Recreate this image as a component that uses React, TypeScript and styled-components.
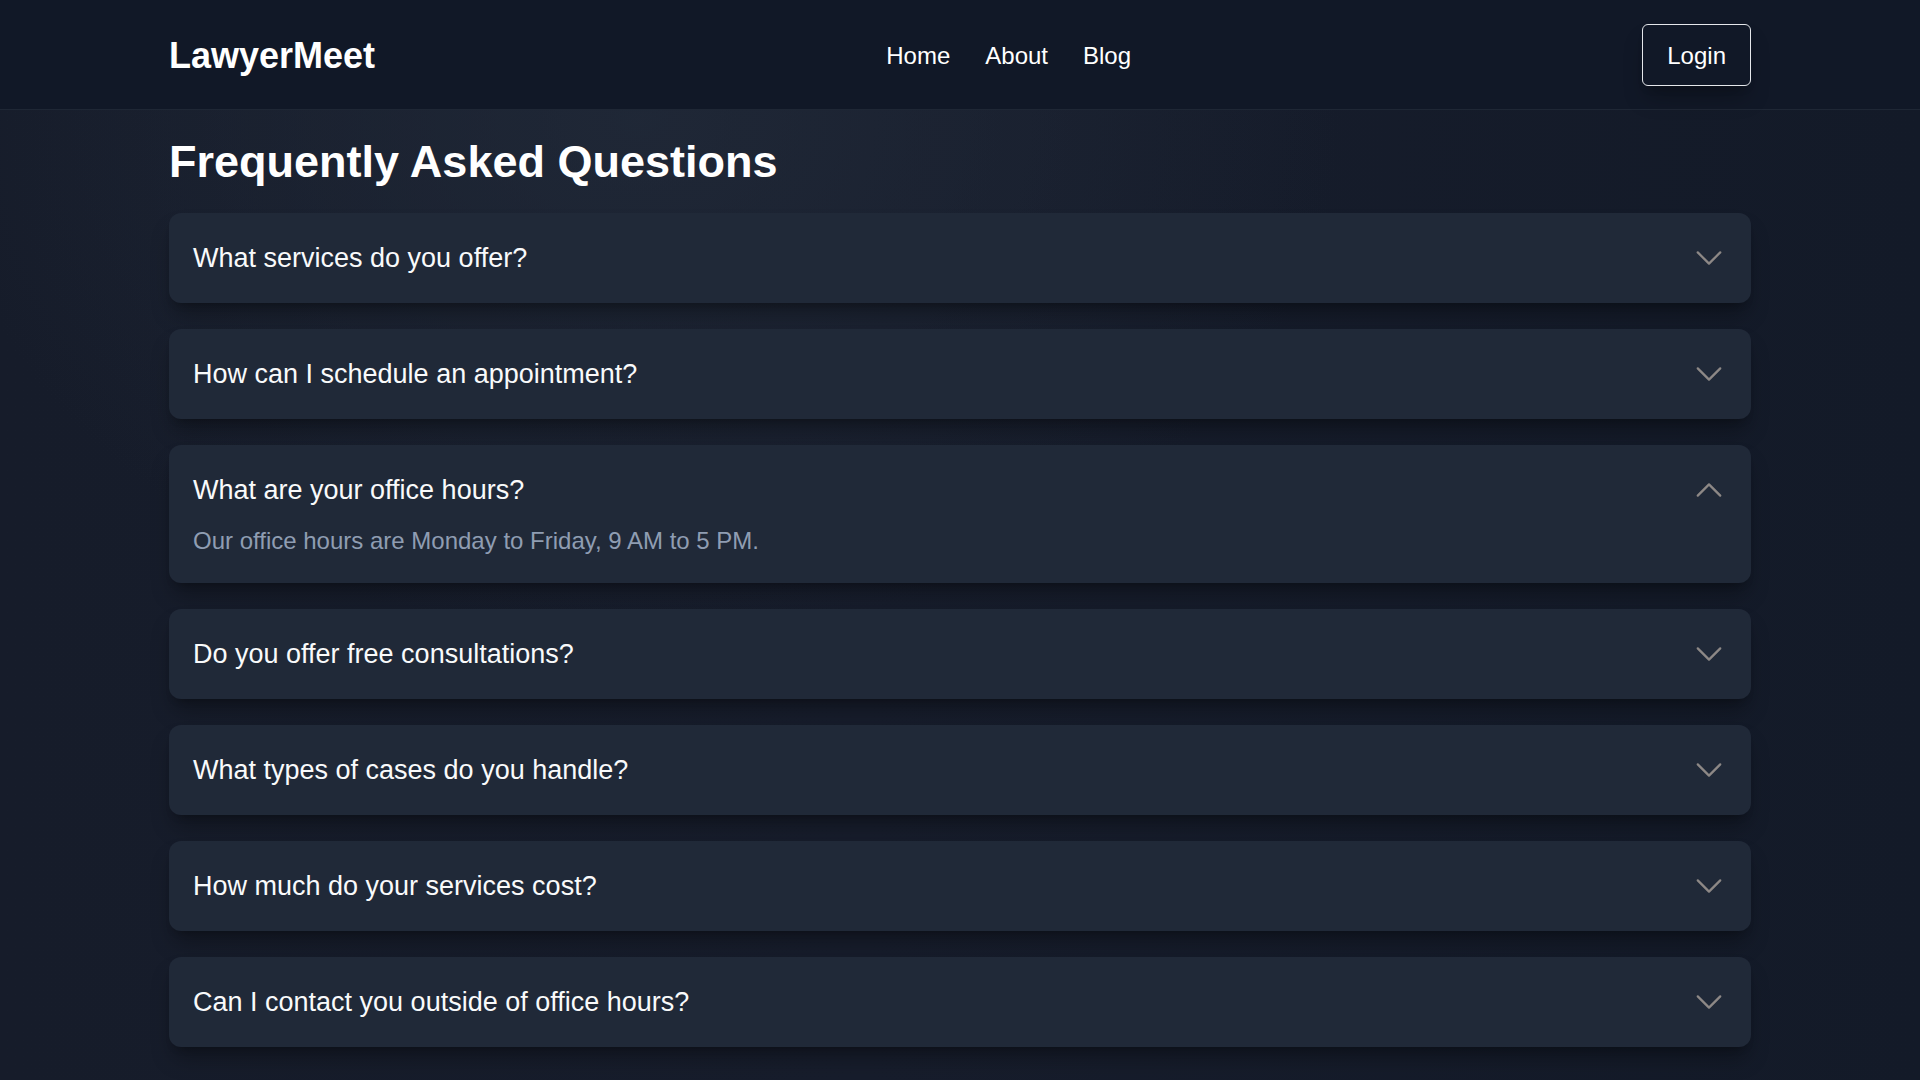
import React, { useState } from "react";
import styled, { createGlobalStyle } from "styled-components";

const GlobalStyle = createGlobalStyle`
  * { box-sizing: border-box; }
  html, body { margin: 0; padding: 0; }
  body {
    font-family: "Liberation Sans", Arial, Helvetica, sans-serif;
    background-color: #151b29;
    background-image:
      radial-gradient(ellipse 700px 520px at 640px 120px, rgba(34, 43, 58, 0.75) 0%, rgba(34, 43, 58, 0) 100%),
      linear-gradient(to right, #161c2a 0%, #171d2c 45%, #131a28 100%);
    min-height: 100vh;
    color: #ffffff;
  }
`;

const Page = styled.div`
  min-height: 100vh;
  display: flex;
  flex-direction: column;
`;

const Header = styled.header`
  height: 110px;
  padding-top: 2px;
  background: #111827;
  border-bottom: 1.5px solid #1f2735;
  display: flex;
  align-items: center;
`;

const HeaderInner = styled.div`
  width: 1582px;
  margin: 0 auto;
  display: flex;
  align-items: center;
  justify-content: space-between;
`;

const Logo = styled.div`
  font-size: 36px;
  font-weight: 700;
  line-height: 54px;
  color: #ffffff;
`;

const Nav = styled.nav`
  display: flex;
  align-items: center;
  gap: 35px;
`;

const NavLink = styled.a`
  font-size: 24px;
  line-height: 36px;
  color: #ffffff;
  text-decoration: none;
  cursor: pointer;
`;

const LoginButton = styled.button`
  height: 62px;
  margin-top: -2px;
  padding: 2px 24px 0;
  font-family: inherit;
  font-size: 24px;
  line-height: 36px;
  color: #ffffff;
  background: transparent;
  border: 1.5px solid #e5e7eb;
  border-radius: 6px;
  box-shadow: 0 15px 22px -4px rgba(0, 0, 0, 0.25), 0 6px 9px -6px rgba(0, 0, 0, 0.25);
  cursor: pointer;
`;

const Main = styled.main`
  width: 1582px;
  margin: 0 auto;
  padding: 25px 0 24px;
`;

const Title = styled.h1`
  margin: 0 0 24px;
  font-size: 45px;
  line-height: 54px;
  font-weight: 700;
  color: #ffffff;
`;

const List = styled.div`
  display: flex;
  flex-direction: column;
  gap: 26px;
`;

const Card = styled.div`
  background: #202938;
  border-radius: 12px;
  padding: 24px;
  box-shadow: 0 15px 22px -4px rgba(0, 0, 0, 0.3), 0 6px 9px -6px rgba(0, 0, 0, 0.3);
`;

const QuestionRow = styled.button`
  width: 100%;
  display: flex;
  align-items: center;
  justify-content: space-between;
  background: none;
  border: none;
  padding: 0;
  cursor: pointer;
  font-family: inherit;
  text-align: left;
`;

const Question = styled.span`
  font-size: 27px;
  line-height: 42px;
  color: #f9fafb;
`;

const Answer = styled.p`
  margin: 12px 0 0;
  font-size: 24px;
  line-height: 36px;
  color: #8f9db2;
`;

const Chevron = ({ up }: { up: boolean }) => (
  <svg width="36" height="36" viewBox="0 0 24 24" fill="none" stroke="#8d8886" strokeWidth={1.5}>
    <path
      strokeLinecap="round"
      strokeLinejoin="round"
      d={up ? "m4.5 15.75 7.5-7.5 7.5 7.5" : "m19.5 8.25-7.5 7.5-7.5-7.5"}
    />
  </svg>
);

const faqs = [
  { q: "What services do you offer?", a: "We offer a wide range of legal services including consultations, representation and document review." },
  { q: "How can I schedule an appointment?", a: "You can schedule an appointment through our website or by calling our office." },
  { q: "What are your office hours?", a: "Our office hours are Monday to Friday, 9 AM to 5 PM." },
  { q: "Do you offer free consultations?", a: "Yes, we offer a free initial consultation for new clients." },
  { q: "What types of cases do you handle?", a: "We handle family, criminal, civil and corporate cases." },
  { q: "How much do your services cost?", a: "Our fees depend on the type and complexity of your case." },
  { q: "Can I contact you outside of office hours?", a: "Yes, you can send us an email and we will respond as soon as possible." },
];

export default function App() {
  const [open, setOpen] = useState<number | null>(2);
  return (
    <Page>
      <GlobalStyle />
      <Header>
        <HeaderInner>
          <Logo>LawyerMeet</Logo>
          <Nav>
            <NavLink>Home</NavLink>
            <NavLink>About</NavLink>
            <NavLink>Blog</NavLink>
          </Nav>
          <LoginButton>Login</LoginButton>
        </HeaderInner>
      </Header>
      <Main>
        <Title>Frequently Asked Questions</Title>
        <List>
          {faqs.map((f, i) => (
            <Card key={f.q}>
              <QuestionRow onClick={() => setOpen(open === i ? null : i)}>
                <Question>{f.q}</Question>
                <Chevron up={open === i} />
              </QuestionRow>
              {open === i && <Answer>{f.a}</Answer>}
            </Card>
          ))}
        </List>
      </Main>
    </Page>
  );
}
